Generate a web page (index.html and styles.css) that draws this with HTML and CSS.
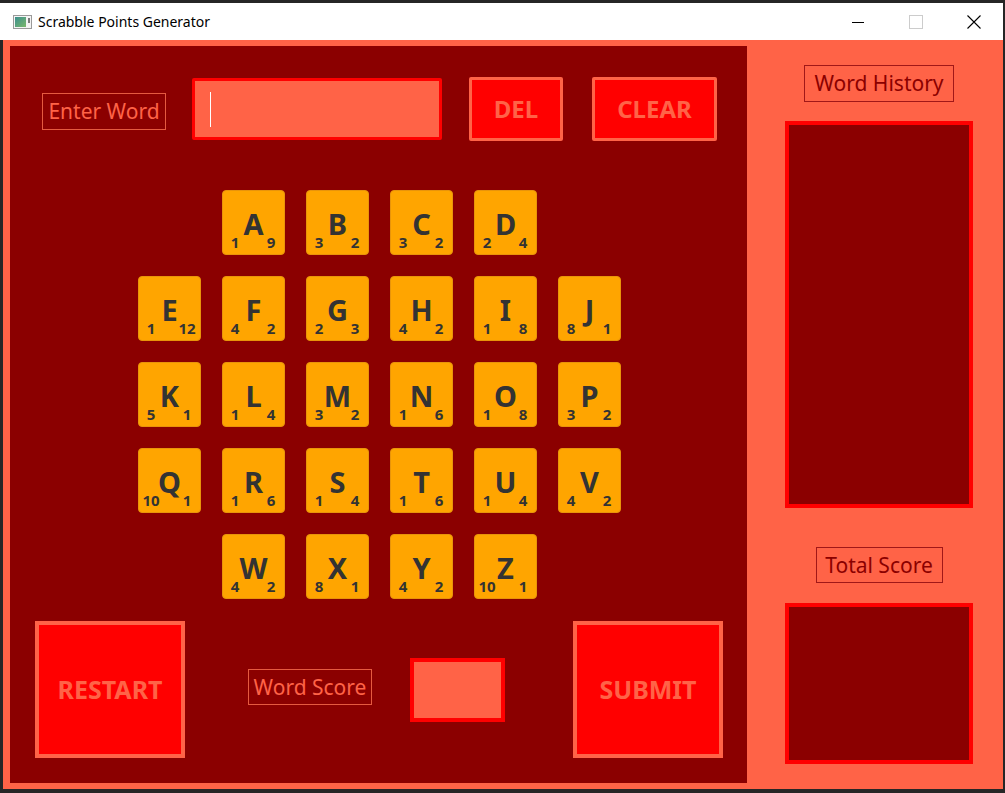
FILE: index.html
```html
<!DOCTYPE html>
<html lang="en">
<head>
<meta charset="utf-8">
<title>Scrabble Points Generator</title>
<link rel="stylesheet" href="styles.css">
</head>
<body>
<div class="window">
  <div class="titlebar">
    <svg class="app-icon" width="19" height="14" viewBox="0 0 19 14">
      <defs>
        <linearGradient id="pane" x1="0" y1="0" x2="1" y2="1">
          <stop offset="0" stop-color="#3c8f8f"/>
          <stop offset="1" stop-color="#7ab86a"/>
        </linearGradient>
      </defs>
      <rect x="0.5" y="0.5" width="18" height="13" fill="#f4f4f4" stroke="#9a9a9a"/>
      <rect x="2" y="2" width="11" height="10" fill="url(#pane)"/>
      <rect x="15" y="3" width="2" height="5" fill="#7a7a7a"/>
    </svg>
    <span class="title">Scrabble Points Generator</span>
    <div class="controls">
      <div class="ctl"><svg width="12" height="12" viewBox="0 0 12 12"><line x1="0" y1="6.5" x2="12" y2="6.5" stroke="#000" stroke-width="1"/></svg></div>
      <div class="ctl"><svg width="14" height="14" viewBox="0 0 14 14"><rect x="0.5" y="0.5" width="13" height="13" fill="none" stroke="#cccccc"/></svg></div>
      <div class="ctl"><svg width="14" height="14" viewBox="0 0 14 14"><path d="M0.5 0.5 L13.5 13.5 M13.5 0.5 L0.5 13.5" stroke="#000" stroke-width="1.1"/></svg></div>
    </div>
  </div>
  <div class="client">
    <div class="main">
      <div class="top-row">
        <div class="label light enter">Enter Word</div>
        <div class="word-input"><span class="caret"></span></div>
        <div class="btn del">DEL</div>
        <div class="btn clear">CLEAR</div>
      </div>
      <div class="tiles">
        <div class="tile c2"><span class="letter">A</span><span class="pts l">1</span><span class="pts r">9</span></div>
        <div class="tile"><span class="letter">B</span><span class="pts l">3</span><span class="pts r">2</span></div>
        <div class="tile"><span class="letter">C</span><span class="pts l">3</span><span class="pts r">2</span></div>
        <div class="tile"><span class="letter">D</span><span class="pts l">2</span><span class="pts r">4</span></div>

        <div class="tile c1"><span class="letter">E</span><span class="pts l">1</span><span class="pts r">12</span></div>
        <div class="tile"><span class="letter">F</span><span class="pts l">4</span><span class="pts r">2</span></div>
        <div class="tile"><span class="letter">G</span><span class="pts l">2</span><span class="pts r">3</span></div>
        <div class="tile"><span class="letter">H</span><span class="pts l">4</span><span class="pts r">2</span></div>
        <div class="tile"><span class="letter">I</span><span class="pts l">1</span><span class="pts r">8</span></div>
        <div class="tile"><span class="letter">J</span><span class="pts l">8</span><span class="pts r">1</span></div>

        <div class="tile"><span class="letter">K</span><span class="pts l">5</span><span class="pts r">1</span></div>
        <div class="tile"><span class="letter">L</span><span class="pts l">1</span><span class="pts r">4</span></div>
        <div class="tile"><span class="letter">M</span><span class="pts l">3</span><span class="pts r">2</span></div>
        <div class="tile"><span class="letter">N</span><span class="pts l">1</span><span class="pts r">6</span></div>
        <div class="tile"><span class="letter">O</span><span class="pts l">1</span><span class="pts r">8</span></div>
        <div class="tile"><span class="letter">P</span><span class="pts l">3</span><span class="pts r">2</span></div>

        <div class="tile"><span class="letter">Q</span><span class="pts l">10</span><span class="pts r">1</span></div>
        <div class="tile"><span class="letter">R</span><span class="pts l">1</span><span class="pts r">6</span></div>
        <div class="tile"><span class="letter">S</span><span class="pts l">1</span><span class="pts r">4</span></div>
        <div class="tile"><span class="letter">T</span><span class="pts l">1</span><span class="pts r">6</span></div>
        <div class="tile"><span class="letter">U</span><span class="pts l">1</span><span class="pts r">4</span></div>
        <div class="tile"><span class="letter">V</span><span class="pts l">4</span><span class="pts r">2</span></div>

        <div class="tile c2"><span class="letter">W</span><span class="pts l">4</span><span class="pts r">2</span></div>
        <div class="tile"><span class="letter">X</span><span class="pts l">8</span><span class="pts r">1</span></div>
        <div class="tile"><span class="letter">Y</span><span class="pts l">4</span><span class="pts r">2</span></div>
        <div class="tile"><span class="letter">Z</span><span class="pts l">10</span><span class="pts r">1</span></div>
      </div>
      <div class="bottom-row">
        <div class="btn big restart">RESTART</div>
        <div class="label light score-label">Word Score</div>
        <div class="score-box"></div>
        <div class="btn big submit">SUBMIT</div>
      </div>
    </div>
    <div class="side">
      <div class="label dark history-label">Word History</div>
      <div class="panel-box history"></div>
      <div class="label dark total-label">Total Score</div>
      <div class="panel-box total"></div>
    </div>
  </div>
</div>
</body>
</html>
```

FILE: styles.css
```css
* { box-sizing: border-box; }

html, body {
  margin: 0;
  padding: 0;
}

body {
  width: 1005px;
  height: 793px;
  background: #262626;
  font-family: "Noto Sans", "Open Sans", sans-serif;
  overflow: hidden;
}

.window {
  padding-top: 3px;
  width: 1003px;
}

.titlebar {
  height: 37px;
  background: #ffffff;
  display: flex;
  align-items: center;
}

.app-icon {
  margin-left: 13px;
  margin-top: 1px;
  flex: none;
}

.title {
  margin-left: 6px;
  font-size: 14px;
  color: #000;
  white-space: nowrap;
}

.controls {
  margin-left: auto;
  display: flex;
  height: 100%;
}

.ctl {
  width: 58px;
  height: 100%;
  display: flex;
  align-items: center;
  justify-content: center;
}

.client {
  margin-left: 3px;
  width: 1000px;
  height: 749px;
  background: #ff6347;
  display: flex;
}

.main {
  margin: 6px 0 6px 7px;
  width: 737px;
  height: 737px;
  background: #8b0000;
  flex: none;
}

.top-row {
  margin-top: 31px;
  height: 64px;
  padding-left: 32px;
  display: flex;
  align-items: center;
}

.label {
  display: flex;
  align-items: center;
  justify-content: center;
  font-size: 21px;
  white-space: nowrap;
  line-height: 1;
}

.label.light {
  color: #ff6347;
  border: 1px solid #e55a40;
}

.label.dark {
  color: #8b0000;
  border: 1px solid #a11818;
}

.enter {
  width: 124px;
  height: 37px;
  margin-top: 5px;
  margin-right: 26px;
}

.word-input {
  width: 250px;
  height: 62px;
  background: #ff6347;
  border: 3px solid #ff0000;
  border-radius: 2px;
  margin-right: 27px;
  display: flex;
  align-items: center;
}

.caret {
  width: 1px;
  height: 35px;
  background: #ffffff;
  margin-left: 15px;
}

.btn {
  display: flex;
  align-items: center;
  justify-content: center;
  background: #ff0000;
  color: #ff6347;
  font-weight: 700;
  font-size: 24px;
  border: 3px solid #ff6347;
  border-radius: 2px;
  line-height: 1;
}

.del {
  width: 94px;
  height: 64px;
  margin-right: 29px;
}

.clear {
  width: 125px;
  height: 64px;
}

.tiles {
  margin-top: 49px;
  margin-left: 128px;
  display: grid;
  grid-template-columns: repeat(6, 63px);
  grid-auto-rows: 65px;
  column-gap: 21px;
  row-gap: 21px;
}

.tile.c1 { grid-column-start: 1; }
.tile.c2 { grid-column-start: 2; }

.tile {
  position: relative;
  background: #ffa500;
  border: 1px solid #e8940a;
  border-radius: 4px;
  display: flex;
  align-items: center;
  justify-content: center;
  color: #333333;
  font-weight: 700;
}

.letter {
  font-size: 29px;
  line-height: 1;
  margin-top: 1px;
}

.pts {
  position: absolute;
  bottom: 4px;
  width: 24px;
  text-align: center;
  font-size: 15px;
  line-height: 1;
}

.pts.l { left: 0; }
.pts.r { right: 1px; }

.bottom-row {
  margin-top: 22px;
  height: 137px;
  padding-left: 25px;
  display: flex;
  align-items: center;
}

.big {
  width: 150px;
  height: 137px;
  border-width: 4px;
  border-radius: 0;
  font-size: 25px;
}

.restart {
  margin-right: 63px;
}

.score-label {
  width: 124px;
  height: 36px;
  margin-top: -5px;
  margin-right: 38px;
}

.score-box {
  width: 95px;
  height: 64px;
  background: #ff6347;
  border: 4px solid #ff0000;
  margin-right: 68px;
}

.side {
  flex: 1;
  display: flex;
  flex-direction: column;
  align-items: center;
  padding-left: 8px;
}

.history-label {
  margin-top: 25px;
  width: 150px;
  height: 37px;
}

.panel-box {
  width: 188px;
  background: #8b0000;
  border: 4px solid #ff0000;
}

.history {
  margin-top: 19px;
  height: 387px;
}

.total-label {
  margin-top: 39px;
  width: 127px;
  height: 36px;
}

.total {
  margin-top: 20px;
  height: 161px;
}
```
